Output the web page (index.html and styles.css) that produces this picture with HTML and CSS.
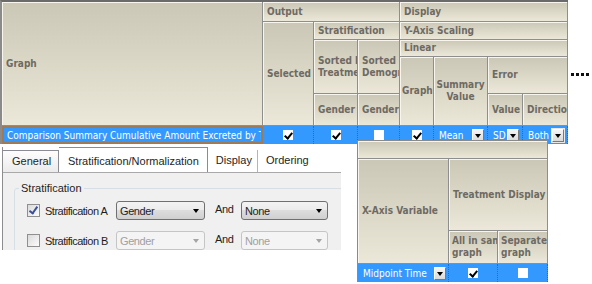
FILE: index.html
```html
<!DOCTYPE html>
<html lang="en">
<head>
  <meta charset="UTF-8">
  <title>Graph Options</title>
  <link rel="stylesheet" href="styles.css">
</head>
<body>
<div class="page">

  <div class="top">
    <div class="grid">
      <div class="hd h-graph">Graph</div>
      <div class="hd h-output">Output</div>
      <div class="hd h-display">Display</div>
      <div class="hd h-selected">Selected</div>
      <div class="hd h-strat">Stratification</div>
      <div class="hd h-yaxis">Y-Axis Scaling</div>
      <div class="hd h-sortt">Sorted by<br>Treatment</div>
      <div class="hd h-sortd">Sorted by<br>Demographic</div>
      <div class="hd h-linear">Linear</div>
      <div class="hd h-lgraph">Graph</div>
      <div class="hd h-summary">Summary<br>Value</div>
      <div class="hd h-error">Error</div>
      <div class="hd h-gender1">Gender</div>
      <div class="hd h-gender2">Gender</div>
      <div class="hd h-value">Value</div>
      <div class="hd h-direction">Direction</div>

      <div class="cell name">Comparison Summary Cumulative Amount Excreted by Treatment</div>
      <div class="cell"><span class="chk on"></span></div>
      <div class="cell"><span class="chk on"></span></div>
      <div class="cell"><span class="chk"></span></div>
      <div class="cell"><span class="chk on"></span></div>
      <div class="cell drop">Mean <span class="dd"></span></div>
      <div class="cell drop">SD <span class="dd"></span></div>
      <div class="cell drop">Both <span class="dd framed"></span></div>
    </div>
    <div class="more"><i></i><i></i><i></i><i></i></div>
  </div>

  <div class="tabs">
    <div class="tabbar">
      <div class="tab first">General</div>
      <div class="tab active">Stratification/Normalization</div>
      <div class="tab plain sep">Display</div>
      <div class="tab plain">Ordering</div>
    </div>
    <div class="tabbody">
      <fieldset class="group">
        <legend>Stratification</legend>
        <div class="srow first-row">
          <span class="cb on"></span>
          <span class="slabel">Stratification A</span>
          <span class="combo">Gender <i></i></span>
          <span class="and">And</span>
          <span class="combo narrow">None <i></i></span>
        </div>
        <div class="srow">
          <span class="cb"></span>
          <span class="slabel">Stratification B</span>
          <span class="combo off">Gender <i></i></span>
          <span class="and">And</span>
          <span class="combo narrow off">None <i></i></span>
        </div>
      </fieldset>
    </div>
  </div>

  <div class="popup">
    <div class="hd p-top"></div>
    <div class="hd p-xaxis">X-Axis Variable</div>
    <div class="hd p-treat">Treatment Display</div>
    <div class="hd p-all">All in same<br>graph</div>
    <div class="hd p-sep">Separate<br>graph</div>

    <div class="cell drop">Midpoint Time <span class="dd"></span></div>
    <div class="cell"><span class="chk on"></span></div>
    <div class="cell"><span class="chk"></span></div>
  </div>

</div>
</body>
</html>
```

FILE: styles.css
```css
body {
  margin: 0;
  background-color: #fff;
  font-family: "DejaVu Sans Condensed", "DejaVu Sans", sans-serif;
}

.page {
  position: relative;
  width: 592px;
  height: 284px;
  overflow: hidden;
}

/* Top options grid */
.top {
  display: flex;
  align-items: center;
}

.grid {
  display: grid;
  grid-template-columns: 261px 51px 44px 42px 34px 54px 35px 45px;
  grid-template-rows: 20px 18px 17px 37px 32px 18px;
  border-top: 2px solid #6a6a6a;
  border-left: 2px solid #8a8a8a;
}

.hd {
  display: flex;
  align-items: center;
  padding-left: 4px;
  background: linear-gradient(#cbc7b6, #ece8d9);
  border-right: 1px solid #8e8e8e;
  border-bottom: 1px solid #8e8e8e;
  box-shadow: inset 1px 1px 0 #f7f5ee;
  color: #6e6a63;
  font-weight: bold;
  font-size: 10px;
  line-height: 12px;
  white-space: nowrap;
  overflow: hidden;
}

.h-graph { grid-column: 1; grid-row: 1 / 6; }
.h-output { grid-column: 2 / 5; grid-row: 1; }
.h-display { grid-column: 5 / 9; grid-row: 1; }
.h-selected { grid-column: 2; grid-row: 2 / 6; }
.h-strat { grid-column: 3 / 5; grid-row: 2; }
.h-yaxis { grid-column: 5 / 9; grid-row: 2; }
.h-sortt { grid-column: 3; grid-row: 3 / 5; }
.h-sortd { grid-column: 4; grid-row: 3 / 5; }
.h-linear { grid-column: 5 / 9; grid-row: 3; }
.h-lgraph { grid-column: 5; grid-row: 4 / 6; padding-left: 2px; }
.h-summary { grid-column: 6; grid-row: 4 / 6; justify-content: center; text-align: center; padding-left: 0; }
.h-error { grid-column: 7 / 9; grid-row: 4; }
.h-gender1 { grid-column: 3; grid-row: 5; }
.h-gender2 { grid-column: 4; grid-row: 5; }
.h-value { grid-column: 7; grid-row: 5; }
.h-direction { grid-column: 8; grid-row: 5; }

/* Selected data row */
.cell {
  display: flex;
  align-items: center;
  justify-content: center;
  background-color: #3399ff;
  border-right: 1px dotted #1f6fc7;
  color: #fff;
  font-size: 10px;
  white-space: nowrap;
  overflow: hidden;
}

.grid .cell {
  grid-row: 6;
}

.cell.name {
  justify-content: flex-start;
  padding-left: 3px;
  border: 2px solid #a07a55;
}

.cell.drop {
  justify-content: space-between;
  padding: 0 3px 0 5px;
}

.chk {
  position: relative;
  width: 10px;
  height: 10px;
  background-color: #fff;
}

.chk.on::after {
  content: "";
  position: absolute;
  left: 3px;
  top: 1px;
  width: 3px;
  height: 6px;
  border: solid #000;
  border-width: 0 2px 2px 0;
  transform: rotate(40deg);
}

.dd {
  position: relative;
  width: 12px;
  height: 13px;
  box-sizing: border-box;
  background: linear-gradient(#f6f6f6, #d9d9d9);
  border: 1px solid;
  border-color: #fff #7a7a7a #7a7a7a #fff;
}

.dd::after {
  content: "";
  position: absolute;
  left: 2px;
  top: 4px;
  border-left: 3.5px solid transparent;
  border-right: 3.5px solid transparent;
  border-top: 4px solid #000;
}

.dd.framed {
  outline: 1px solid #e8e8e8;
}

.more {
  display: flex;
  gap: 2px;
  margin: 5px 0 0 3px;
}

.more i {
  width: 3px;
  height: 3px;
  background-color: #111;
}

/* Tab control */
.tabs {
  width: 338px;
  margin: 3px 0 0 2px;
  border-left: 1px solid #8d8d8d;
  font-family: "Liberation Sans", Arial, sans-serif;
  font-size: 11px;
  color: #1e1e1e;
}

.tabbar {
  display: flex;
  align-items: flex-end;
  height: 25px;
}

.tab {
  height: 22px;
  line-height: 21px;
  box-sizing: border-box;
  padding: 0 7px 0 9px;
  border-top: 1px solid #898c95;
  border-right: 1px solid #898c95;
  background: linear-gradient(#fdfdfd, #ebebeb);
}

.tab.first {
  width: 56px;
}

.tab.active {
  height: 25px;
  line-height: 26px;
  padding: 0 8px 0 9px;
  background: #fff;
}

.tab.plain {
  border-top: none;
  border-right: none;
  background: none;
  padding: 0 5px 0 8px;
}

.tab.sep {
  border-right: 1px solid #b5b5b5;
}

.tabbody {
  height: 77px;
  background-color: #f0f0f0;
  border-top: 1px solid #a9a9a9;
  overflow: hidden;
}

.group {
  margin: 9px -40px 0 11px;
  padding: 0 0 20px 0;
  border: 1px solid #d5dfe5;
  border-radius: 3px;
}

.group legend {
  margin-left: 4px;
  padding: 0 2px;
  font-size: 11px;
  line-height: 13px;
}

.srow {
  display: flex;
  align-items: center;
  height: 19px;
  margin: 11px 0 0 12px;
}

.srow.first-row {
  margin-top: 6px;
}

.cb {
  position: relative;
  width: 13px;
  height: 13px;
  box-sizing: border-box;
  border: 1px solid #8f8f8f;
  background: linear-gradient(135deg, #dadada, #fbfbfb);
}

.cb.on::after {
  content: "";
  position: absolute;
  left: 3px;
  top: 0;
  width: 3px;
  height: 7px;
  border: solid #3b4f9a;
  border-width: 0 2px 2px 0;
  transform: rotate(35deg);
}

.slabel {
  width: 71px;
  margin-left: 5px;
  letter-spacing: -0.5px;
}

.combo {
  display: flex;
  align-items: center;
  justify-content: space-between;
  width: 89px;
  height: 19px;
  box-sizing: border-box;
  padding: 0 5px 0 3px;
  border: 1px solid #707070;
  border-radius: 3px;
  background: linear-gradient(#f3f3f3, #ebebeb 50%, #dddddd 50%, #d0d0d0);
  letter-spacing: -0.4px;
}

.combo.narrow {
  width: 87px;
}

.combo i {
  border-left: 3.5px solid transparent;
  border-right: 3.5px solid transparent;
  border-top: 4px solid #000;
}

.combo.off {
  border-color: #c5c5c5;
  background: #f4f4f4;
  color: #a0a0a0;
}

.combo.off i {
  border-top-color: #a5a5a5;
}

.and {
  align-self: flex-start;
  width: 26px;
  margin: 2px 0 0 10px;
  letter-spacing: -0.4px;
}

/* Floating x-axis panel */
.popup {
  position: absolute;
  left: 357px;
  top: 140px;
  display: grid;
  grid-template-columns: 91px 49px 50px;
  grid-template-rows: 18px 72px 33px 18px;
  border-top: 1px solid #8a8a8a;
  border-left: 1px solid #8a8a8a;
}

.p-top { grid-column: 1 / 4; grid-row: 1; }
.p-xaxis { grid-column: 1; grid-row: 2 / 4; }
.p-treat { grid-column: 2 / 4; grid-row: 2; }
.p-all { grid-column: 2; grid-row: 3; padding-left: 3px; }
.p-sep { grid-column: 3; grid-row: 3; padding-left: 3px; }

.popup .cell {
  grid-row: 4;
}

.popup .cell.drop {
  padding: 0 2px 0 5px;
}
```
